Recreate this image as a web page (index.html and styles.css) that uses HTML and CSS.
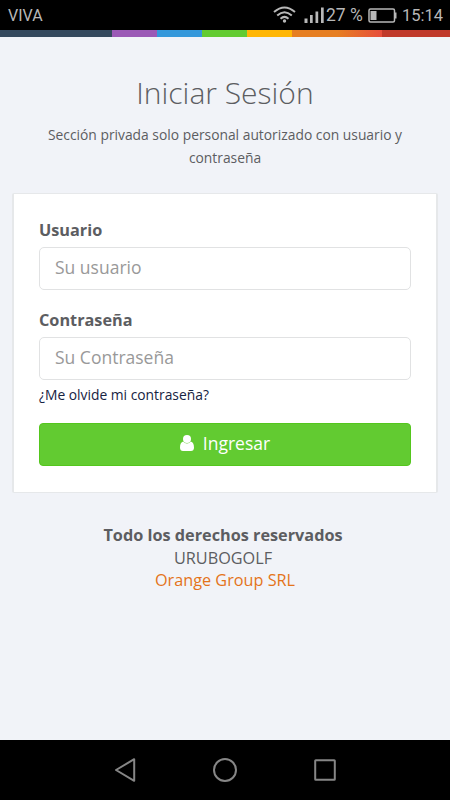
FILE: index.html
```html
<!DOCTYPE html>
<html lang="es">
<head>
<meta charset="utf-8">
<title>Iniciar Sesión</title>
<link rel="stylesheet" href="styles.css">
</head>
<body>
<header class="status">
  <span class="carrier">VIVA</span>
  <svg class="status-icons" width="54" height="30" viewBox="0 0 54 30">
    <g fill="none" stroke="#b8b8b8" stroke-width="2">
      <path d="M1 13Q11.500 4 22 13"/><path d="M4.200 16.500Q11.500 10 18.800 16.500"/><path d="M7.500 19.700Q11.500 16 15.500 19.700"/>
    </g>
    <circle cx="11.500" cy="22" r="1.700" fill="#b8b8b8"/>
    <path fill="#b8b8b8" d="M31.500 19.500h3V24h-3zM37 16h2.700v8H37zM42.500 12.500h2.700V24h-2.700zM48 8.500h2.700V24H48z"/>
  </svg>
  <span class="percent">27 %</span>
  <svg class="battery" width="29" height="30" viewBox="0 0 29 30">
    <rect x="1" y="10" width="25.500" height="13" rx="1.500" fill="none" stroke="#b8b8b8" stroke-width="1.500"/>
    <path d="M2.500 12h6v9h-6zM27 13.500h1.500v6H27z" fill="#b8b8b8"/>
  </svg>
  <span class="clock">15:14</span>
</header>
<div class="stripe"></div>
<main class="page">
  <h1 class="title">Iniciar Sesión</h1>
  <p class="intro">Sección privada solo personal autorizado con usuario y<br>contraseña</p>
  <form class="card">
    <label class="label" for="user">Usuario</label>
    <input class="field" id="user" type="text" placeholder="Su usuario">
    <label class="label label-second" for="pass">Contraseña</label>
    <input class="field" id="pass" type="password" placeholder="Su Contraseña">
    <a class="forgot">¿Me olvide mi contraseña?</a>
    <button class="submit" type="button">
      <svg width="14" height="16" viewBox="0 0 14 16" fill="#fff"><circle cx="7" cy="4" r="4"/><path d="M3.200 6.600C1 7 0 9.300 0 12.700C0 14.700 1.200 16 3 16H11C12.800 16 14 14.700 14 12.700C14 9.300 13 7 10.800 6.600C8.800 9.100 5.200 9.100 3.200 6.600Z"/></svg>
      <span>Ingresar</span>
    </button>
  </form>
  <footer class="footer">
    <strong class="rights">Todo los derechos reservados</strong>
    <span class="company">URUBOGOLF</span>
    <a class="author">Orange Group SRL</a>
  </footer>
</main>
<nav class="navbar">
  <svg width="22" height="26" viewBox="0 0 22 26"><path d="M20.200 2.200V23.800L2 13Z"/></svg>
  <svg width="26" height="26" viewBox="0 0 26 26"><circle cx="13" cy="13" r="11"/></svg>
  <svg width="22" height="26" viewBox="0 0 22 26"><rect x="1.200" y="3.200" width="19.600" height="19.600" rx=".6"/></svg>
</nav>
</body>
</html>
```

FILE: styles.css
```css
* { box-sizing: border-box; }
body {
  margin: 0;
  width: 450px;
  height: 800px;
  overflow: hidden;
  display: flex;
  flex-direction: column;
  background: #f1f3f8;
  color: #5c5d61;
  font-family: "Open Sans", "Noto Sans", sans-serif;
}
.status {
  height: 30px;
  flex: none;
  display: flex;
  align-items: center;
  padding: 1px 7px 0 8px;
  background: #000;
  color: #b8b8b8;
  font: 16px/29px Roboto, sans-serif;
}
.status svg { display: block; flex: none; margin-top: -3px; }
.carrier { margin-right: auto; }
.percent { width: 42px; font-size: 17.5px; white-space: nowrap; }
.status .percent { margin-left: -1px; }
.clock { width: 41px; font-size: 16.5px; white-space: nowrap; }
.battery { margin-right: 5px; }
.stripe {
  height: 7px;
  flex: none;
  background: linear-gradient(90deg, #34495e 112.5px, #9b59b6 112.5px 157.5px, #3498db 157.5px 202.5px, #62cb31 202.5px 247.5px, #ffb606 247.5px 292.5px, #e67e22 292.5px 337.5px, #e74c3c 382.5px, #c0392b 382.5px);
}
.page { flex: 1; padding: 37px 12px 0; }
.title {
  margin: 0;
  height: 38px;
  font-size: 30px;
  line-height: 38px;
  font-weight: 300;
  text-align: center;
}
.intro {
  margin: 12px 0 0;
  height: 45px;
  font-size: 13.83px;
  line-height: 22.5px;
  text-align: center;
  white-space: nowrap;
}
.card {
  height: 300px;
  margin-top: 23.5px;
  padding: 25px 25px 0;
  border: 1px solid #e6e8ea;
  border-width: 1px 2px;
  border-radius: 2px;
  background: #fff;
}
.label {
  display: block;
  height: 23px;
  margin-bottom: 5.5px;
  font-size: 16.25px;
  line-height: 23px;
  font-weight: 700;
}
.label-second { margin-top: 19px; }
.field {
  display: block;
  width: 100%;
  height: 42.5px;
  padding: 0 15px 3px;
  border: 1px solid #e1e2e3;
  border-radius: 5px;
  outline: 0;
  background: #fff;
  font: 17.5px "Open Sans", sans-serif;
}
.field::placeholder { color: #999; opacity: 1; }
.forgot {
  display: block;
  height: 22px;
  margin-top: 4px;
  font-size: 13.83px;
  line-height: 22px;
  color: #162342;
}
.submit {
  display: flex;
  align-items: center;
  justify-content: center;
  gap: 9px;
  width: 100%;
  height: 42.5px;
  margin-top: 17.5px;
  padding: 0 0 3px;
  border: 1px solid #54c61d;
  border-radius: 4px;
  background: #62cb31;
  color: #fff;
  font: 17.5px "Open Sans", sans-serif;
}
.footer {
  display: flex;
  flex-direction: column;
  align-items: center;
  margin-top: 31.5px;
  font-size: 16.25px;
  line-height: 22.7px;
}
.rights, .company { padding-right: 4px; }
.author { color: #e4731b; }
.navbar {
  height: 60px;
  flex: none;
  display: flex;
  justify-content: space-between;
  align-items: center;
  padding: 0 114px;
  background: #000;
}
.navbar svg { fill: none; stroke: #868686; stroke-width: 2; stroke-linejoin: round; }
```
